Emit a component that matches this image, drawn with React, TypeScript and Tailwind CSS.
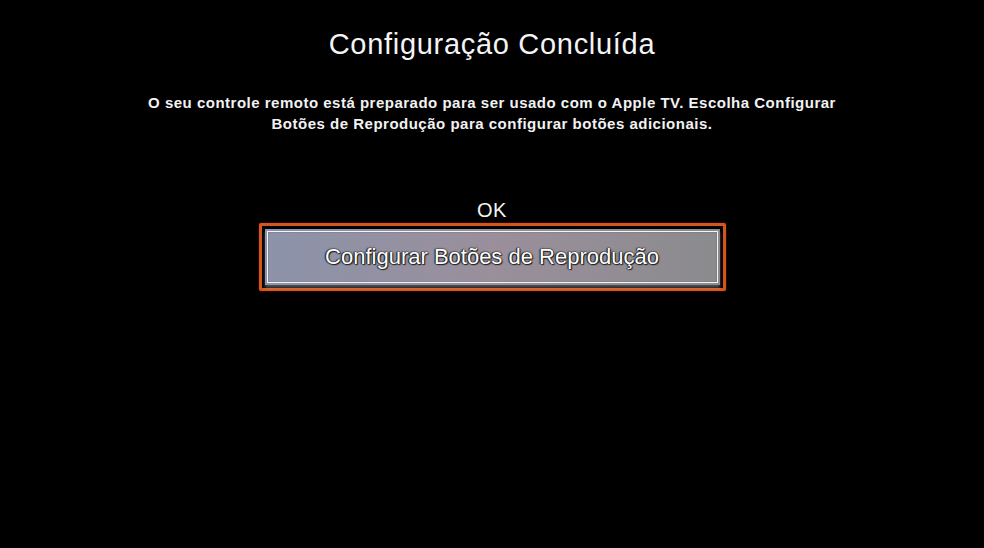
import React from 'react'

export default function App() {
  return (
    <div
      className="w-[984px] h-[548px] bg-black text-white flex flex-col items-center"
      style={{ fontFamily: '"Liberation Sans", Arial, sans-serif' }}
    >
      {/* Title */}
      <h1 className="mt-[27px] text-[29px] leading-[34px] font-normal tracking-[0.7px] text-[#f4f4f6]">
        Configuração Concluída
      </h1>

      {/* Description */}
      <p className="mt-[31px] text-[15px] leading-[21px] font-bold text-center tracking-[0.5px] text-[#f2f2f4]">
        O seu controle remoto está preparado para ser usado com o Apple TV. Escolha Configurar
        <br />
        Botões de Reprodução para configurar botões adicionais.
      </p>

      {/* Options */}
      <div className="mt-[65px] flex flex-col items-center">
        <div className="text-[20px] leading-[23px] tracking-[0.5px] text-[#f4f4f6]">OK</div>
        <div className="mt-[1px] w-[467px] h-[68px] border-[3px] border-[#d4561f] bg-black p-[3px] rounded-[2px] shadow-[0_0_2px_#7a2a10]">
          <div className="h-[56px] bg-gradient-to-r from-[#8c93aa] via-[#9a8f9b] to-[#8b8b8e] p-[2px] shadow-[0_3px_3px_rgba(220,220,225,0.35)]">
            <div className="h-full border border-[#f4f4f8] shadow-[inset_0_0_1px_#222] flex items-center justify-center">
              <span
                className="text-[22px] leading-[26px] text-white"
                style={{ textShadow: '0 0 1px #111, 0 0 2px #222, 1px 1px 1px #222, -1px 0 1px #222' }}
              >
                Configurar Botões de Reprodução
              </span>
            </div>
          </div>
        </div>
      </div>
    </div>
  )
}
